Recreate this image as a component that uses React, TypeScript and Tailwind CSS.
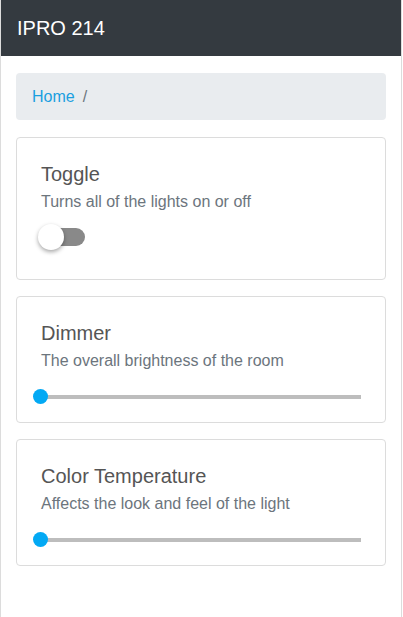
import React from "react";

function Slider() {
  return (
    <div className="relative mt-[22px] h-[4px] -ml-[1px] mr-[-1px]">
      <div className="absolute left-0 right-[1px] top-0 h-[4px] bg-[#bdbdbd]" />
      <div className="absolute left-[-7px] top-[-6px] h-[15px] w-[15px] rounded-full bg-[#03a9f4]" />
    </div>
  );
}

function Card({ title, sub, children, pb }: { title: string; sub: string; children: React.ReactNode; pb: string }) {
  return (
    <div className={`rounded-[4px] border border-[#dcdcdc] bg-white px-[24px] pt-[24px] ${pb}`}>
      <div className="text-[20px] leading-[24px] text-[#555555]">{title}</div>
      <div className="mt-[4px] text-[16px] leading-[24px] text-[#6c757d]">{sub}</div>
      {children}
    </div>
  );
}

export default function App() {
  return (
    <div
      className="h-[617px] w-[402px] border-x border-[#dcdcdc] bg-white"
      style={{ fontFamily: '"Liberation Sans", Arial, sans-serif' }}
    >
      <div className="flex h-[56px] items-center bg-[#343a40] px-[16px]">
        <span className="text-[20px] text-white">IPRO 214</span>
      </div>
      <div className="flex flex-col gap-[16px] px-[15px] pt-[17px]">
        <div className="mb-[1px] flex h-[47px] items-center rounded-[4px] bg-[#e9ecef] px-[16px] text-[16px]">
          <span className="text-[#1a9fe0]">Home</span>
          <span className="ml-[8px] text-[#6c757d]">/</span>
        </div>
        <Card title="Toggle" sub="Turns all of the lights on or off" pb="pb-[30px]">
          <div className="relative mt-[11px] h-[24px] w-[48px]">
            <div className="absolute left-[8px] top-[3px] h-[18px] w-[36px] rounded-full bg-[#898989]" />
            <div className="absolute left-[-3px] top-[-1px] h-[26px] w-[26px] rounded-full bg-white shadow-[0_2px_4px_rgba(0,0,0,0.35)]" />
          </div>
        </Card>
        <Card title="Dimmer" sub="The overall brightness of the room" pb="pb-[23px]">
          <Slider />
        </Card>
        <Card title="Color Temperature" sub="Affects the look and feel of the light" pb="pb-[23px]">
          <Slider />
        </Card>
      </div>
    </div>
  );
}
